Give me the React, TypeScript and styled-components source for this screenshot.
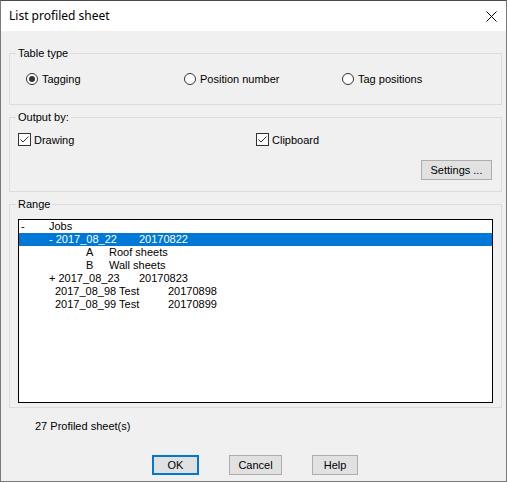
import React from "react";
import styled, { createGlobalStyle } from "styled-components";

const Global = createGlobalStyle`
  html, body { margin: 0; padding: 0; background: #ffffff; }
  body { font-family: "Liberation Sans", Arial, sans-serif; font-size: 11px; color: #000; }
`;

const Window = styled.div`
  width: 505px;
  height: 480px;
  border: 1px solid #7a7a7a;
  border-top-color: #4a4a4a;
  background: #f0f0f0;
  display: flex;
  flex-direction: column;
`;

const TitleBar = styled.div`
  height: 30px;
  background: #ffffff;
  display: flex;
  align-items: center;
  justify-content: space-between;
  padding: 0 9px 0 8px;
  font-family: "Noto Sans", "Open Sans", sans-serif;
  font-size: 12px;
  color: #000;
`;

const Title = styled.span`
  margin-top: -1px;
`;

const CloseBtn = styled.div`
  width: 11px;
  height: 11px;
  display: flex;
`;

const Body = styled.div`
  flex: 1;
  display: flex;
  flex-direction: column;
  padding: 22px 0 0 8px;
`;

const Group = styled.div<{ $h: number; $mt?: number }>`
  position: relative;
  width: 491px;
  height: ${(p) => p.$h - 2}px;
  border: 1px solid #dcdcdc;
  margin-top: ${(p) => p.$mt ?? 0}px;
`;

const Legend = styled.span`
  position: absolute;
  top: -7px;
  left: 6px;
  padding: 0 2px;
  line-height: 13px;
  background: #f0f0f0;
`;

const RadioRow = styled.div`
  display: grid;
  grid-template-columns: 158px 158px 158px;
  padding: 18px 0 0 16px;
`;

const RadioLabel = styled.label`
  display: flex;
  align-items: center;
  gap: 4px;
  height: 13px;
`;

const RadioCircle = styled.span<{ $on?: boolean }>`
  box-sizing: border-box;
  width: 12px;
  height: 12px;
  border-radius: 50%;
  border: 1px solid #333333;
  background: #ffffff;
  display: flex;
  align-items: center;
  justify-content: center;
  &::after {
    content: "";
    width: 6px;
    height: 6px;
    border-radius: 50%;
    background: ${(p) => (p.$on ? "#333333" : "transparent")};
  }
`;

const CheckRow = styled.div`
  display: grid;
  grid-template-columns: 238px 200px;
  padding: 15px 0 0 8px;
`;

const CheckLabel = styled.label`
  display: flex;
  align-items: center;
  gap: 3px;
  height: 13px;
`;

const CheckBox = styled.span`
  box-sizing: border-box;
  width: 13px;
  height: 13px;
  border: 1px solid #333333;
  background: #ffffff;
  display: flex;
  align-items: center;
  justify-content: center;
`;

const SettingsRow = styled.div`
  display: flex;
  justify-content: flex-end;
  padding: 14px 9px 0 0;
`;

const Button = styled.button<{ $w: number; $def?: boolean }>`
  box-sizing: border-box;
  width: ${(p) => p.$w}px;
  height: 20px;
  margin: 0;
  padding: 0;
  font-family: "Liberation Sans", Arial, sans-serif;
  font-size: 11px;
  color: #000;
  background: #e1e1e1;
  border: ${(p) => (p.$def ? "2px solid #0078d7" : "1px solid #adadad")};
`;

const TreeBox = styled.div`
  box-sizing: border-box;
  width: 475px;
  height: 184px;
  margin: 14px 0 0 8px;
  border: 1px solid #000000;
  background: #ffffff;
  display: flex;
  flex-direction: column;
`;

const TreeRow = styled.div<{ $indent: number; $sel?: boolean }>`
  height: 13px;
  line-height: 13px;
  display: flex;
  padding-left: ${(p) => p.$indent}px;
  background: ${(p) => (p.$sel ? "#0078d7" : "transparent")};
  color: ${(p) => (p.$sel ? "#ffffff" : "#000000")};
  white-space: pre;
`;

const Cell = styled.span<{ $w?: number }>`
  flex: ${(p) => (p.$w ? `0 0 ${p.$w}px` : "0 0 auto")};
`;

const Status = styled.div`
  margin: 12px 0 0 26px;
  line-height: 13px;
`;

const ButtonBar = styled.div`
  display: flex;
  gap: 30px;
  padding: 22px 0 0 143px;
`;

type Row = { indent: number; sel?: boolean; cells: { w?: number; t: string }[] };

const rows: Row[] = [
  { indent: 2, cells: [{ w: 28, t: "-" }, { t: "Jobs" }] },
  { indent: 30, sel: true, cells: [{ w: 90, t: "- 2017_08_22" }, { t: "20170822" }] },
  { indent: 67, cells: [{ w: 23, t: "A" }, { t: "Roof sheets" }] },
  { indent: 67, cells: [{ w: 23, t: "B" }, { t: "Wall sheets" }] },
  { indent: 30, cells: [{ w: 90, t: "+ 2017_08_23" }, { t: "20170823" }] },
  { indent: 36, cells: [{ w: 113, t: "2017_08_98 Test" }, { t: "20170898" }] },
  { indent: 36, cells: [{ w: 113, t: "2017_08_99 Test" }, { t: "20170899" }] },
];

const Check = () => (
  <svg width="11" height="11" viewBox="0 0 11 11">
    <path d="M1.5 5.5 L4 8 L9.5 2.5" fill="none" stroke="#333" strokeWidth="1" />
  </svg>
);

export default function App() {
  return (
    <>
      <Global />
      <Window>
        <TitleBar>
          <Title>List profiled sheet</Title>
          <CloseBtn>
            <svg width="11" height="11" viewBox="0 0 11 11">
              <path d="M0.5 0.5 L10.5 10.5 M10.5 0.5 L0.5 10.5" stroke="#000" strokeWidth="1" />
            </svg>
          </CloseBtn>
        </TitleBar>
        <Body>
          <Group $h={52}>
            <Legend>Table type</Legend>
            <RadioRow>
              <RadioLabel>
                <RadioCircle $on />
                Tagging
              </RadioLabel>
              <RadioLabel>
                <RadioCircle />
                Position number
              </RadioLabel>
              <RadioLabel>
                <RadioCircle />
                Tag positions
              </RadioLabel>
            </RadioRow>
          </Group>
          <Group $h={75} $mt={12}>
            <Legend>Output by:</Legend>
            <CheckRow>
              <CheckLabel>
                <CheckBox>
                  <Check />
                </CheckBox>
                Drawing
              </CheckLabel>
              <CheckLabel>
                <CheckBox>
                  <Check />
                </CheckBox>
                Clipboard
              </CheckLabel>
            </CheckRow>
            <SettingsRow>
              <Button $w={71}>Settings ...</Button>
            </SettingsRow>
          </Group>
          <Group $h={204} $mt={12}>
            <Legend>Range</Legend>
            <TreeBox>
              {rows.map((r, i) => (
                <TreeRow key={i} $indent={r.indent} $sel={r.sel}>
                  {r.cells.map((c, j) => (
                    <Cell key={j} $w={c.w}>
                      {c.t}
                    </Cell>
                  ))}
                </TreeRow>
              ))}
            </TreeBox>
          </Group>
          <Status>27 Profiled sheet(s)</Status>
          <ButtonBar>
            <Button $w={47} $def>
              OK
            </Button>
            <Button $w={53}>Cancel</Button>
            <Button $w={46}>Help</Button>
          </ButtonBar>
        </Body>
      </Window>
    </>
  );
}
